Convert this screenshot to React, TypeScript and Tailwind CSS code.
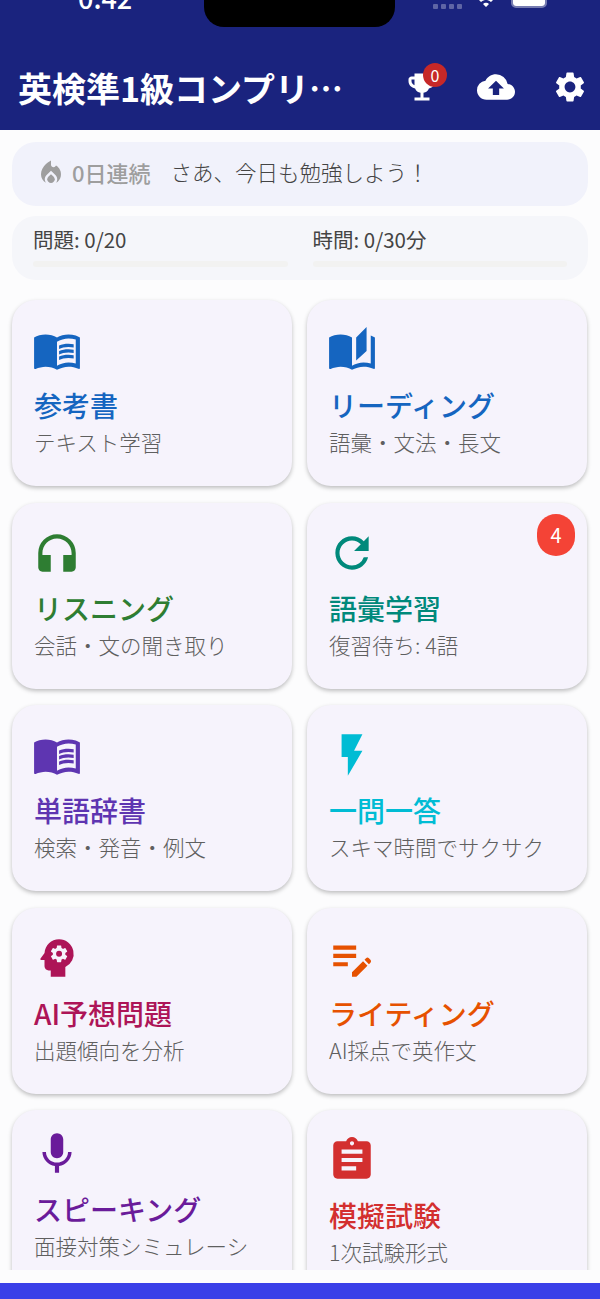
import type { IconType } from "react-icons";
import {
  MdAssignment,
  MdAutoStories,
  MdCloudUpload,
  MdEditNote,
  MdEmojiEvents,
  MdFlashOn,
  MdHeadphones,
  MdLocalFireDepartment,
  MdMenuBook,
  MdMic,
  MdPsychology,
  MdRefresh,
  MdSettings,
  MdWifi,
} from "react-icons/md";

type Feature = {
  title: string;
  sub: string;
  icon: IconType;
  iconClass: string;
  titleClass: string;
  badge?: number;
};

const FEATURES: Feature[] = [
  { title: "参考書", sub: "テキスト学習", icon: MdMenuBook, iconClass: "text-[#1565c0]", titleClass: "text-[#1565c0]" },
  { title: "リーディング", sub: "語彙・文法・長文", icon: MdAutoStories, iconClass: "text-[#1565c0]", titleClass: "text-[#1565c0]" },
  { title: "リスニング", sub: "会話・文の聞き取り", icon: MdHeadphones, iconClass: "text-[#2e7d32]", titleClass: "text-[#2e7d32]" },
  { title: "語彙学習", sub: "復習待ち: 4語", icon: MdRefresh, iconClass: "text-[#00897b]", titleClass: "text-[#00897b]", badge: 4 },
  { title: "単語辞書", sub: "検索・発音・例文", icon: MdMenuBook, iconClass: "text-[#5e35b1]", titleClass: "text-[#5e35b1]" },
  { title: "一問一答", sub: "スキマ時間でサクサク", icon: MdFlashOn, iconClass: "text-[#00bcd4]", titleClass: "text-[#00bcd4]" },
  { title: "AI予想問題", sub: "出題傾向を分析", icon: MdPsychology, iconClass: "text-[#ad1457]", titleClass: "text-[#ad1457]" },
  { title: "ライティング", sub: "AI採点で英作文", icon: MdEditNote, iconClass: "text-[#e65100]", titleClass: "text-[#e65100]" },
  { title: "スピーキング", sub: "面接対策シミュレーシ", icon: MdMic, iconClass: "-mt-[6px] text-[#6a1b9a]", titleClass: "text-[#6a1b9a]" },
  { title: "模擬試験", sub: "1次試験形式", icon: MdAssignment, iconClass: "text-[#d32f2f]", titleClass: "text-[#d32f2f]" },
];

function StatusBar() {
  return (
    <div className="absolute inset-x-0 top-0 h-[30px] overflow-hidden text-white">
      <span className="absolute left-[78px] top-[-17px] text-[27px] font-medium leading-[30px]">0:42</span>
      <div className="absolute left-[204px] top-[-20px] h-[47px] w-[191px] rounded-[20px] bg-black" />
      <div className="absolute left-[433px] top-[4px] flex gap-[3px]">
        {[0, 1, 2, 3].map((i) => (
          <span key={i} className="size-[5px] rounded-[1px] bg-white/30" />
        ))}
      </div>
      <MdWifi className="absolute left-[474px] top-[-13px] size-[24px]" />
      <div className="absolute left-[511px] top-[-12px] h-[20px] w-[36px] rounded-[5px] border-2 border-white/40">
        <div className="h-full w-full rounded-[3px] bg-white" />
      </div>
    </div>
  );
}

function Stat({ label }: { label: string }) {
  return (
    <div className="flex-1">
      <p className="text-[20.5px] leading-[26px] text-[#444444]">{label}</p>
      <div className="mt-[9px] h-[6px] rounded-full bg-[#f2f2f1]" />
    </div>
  );
}

function FeatureCard({ feature }: { feature: Feature }) {
  const Icon = feature.icon;
  return (
    <div className="relative h-[186px] rounded-[24px] bg-[#f6f3fc] pl-[22px] pt-[25px] shadow-[0_2px_4px_rgba(0,0,0,0.25)]">
      {feature.badge !== undefined && (
        <span className="absolute right-[12px] top-[11px] flex h-[42px] w-[38px] items-center justify-center rounded-full bg-[#f44336] text-[20px] text-white">
          {feature.badge}
        </span>
      )}
      <Icon className={`-ml-[2px] size-[50px] ${feature.iconClass}`} />
      <h2 className={`mt-[10px] whitespace-nowrap text-[28px] font-medium leading-[40px] ${feature.titleClass}`}>{feature.title}</h2>
      <p className="whitespace-nowrap text-[21.5px] font-light leading-[33px] text-[#5f5f5f]">{feature.sub}</p>
    </div>
  );
}

export default function App() {
  return (
    <div className="flex h-[1299px] flex-col overflow-hidden bg-[#fcfcfd] font-['Noto_Sans_CJK_JP',sans-serif]">
      <header className="relative flex h-[130px] shrink-0 items-end bg-[#1a237e] pb-[12px] pl-[18px] text-white">
        <StatusBar />
        <h1 className="w-[335px] whitespace-nowrap text-[34px] font-bold leading-[60px]">英検準1級コンプリ…</h1>
        <div className="relative mb-[13px] ml-[51px] size-[36px]">
          <MdEmojiEvents className="size-[36px]" />
          <span className="absolute left-[19px] top-[-6px] flex size-[24px] items-center justify-center rounded-full bg-[#c62828] text-[16px]">
            0
          </span>
        </div>
        <MdCloudUpload className="mb-[12px] ml-[37px] size-[38px]" />
        <MdSettings className="mb-[13px] ml-[37px] size-[36px]" />
      </header>

      <main className="h-[1140px] shrink-0 overflow-hidden px-[12px] pt-[12px]">
        <div className="flex h-[64px] items-center rounded-[24px] bg-[#f1f2fb] pb-[3px] pl-[24px]">
          <MdLocalFireDepartment className="size-[30px] text-[#9e9e9e]" />
          <span className="ml-[6px] text-[22px] font-medium text-[#9e9e9e]">0日連続</span>
          <span className="ml-[20px] text-[21.5px] font-light text-[#444444]">さあ、今日も勉強しよう！</span>
        </div>
        <div className="mt-[10px] flex h-[64px] gap-[25px] rounded-[24px] bg-[#f5f6fa] px-[21px] pt-[10px]">
          <Stat label="問題: 0/20" />
          <Stat label="時間: 0/30分" />
        </div>
        <div className="mr-[1px] mt-[20px] grid grid-cols-2 gap-x-[15px] gap-y-[16.5px]">
          {FEATURES.map((feature) => (
            <FeatureCard key={feature.title} feature={feature} />
          ))}
        </div>
      </main>

      <div className="mt-[13px] flex-1 bg-[#3a3fe8]" />
    </div>
  );
}
